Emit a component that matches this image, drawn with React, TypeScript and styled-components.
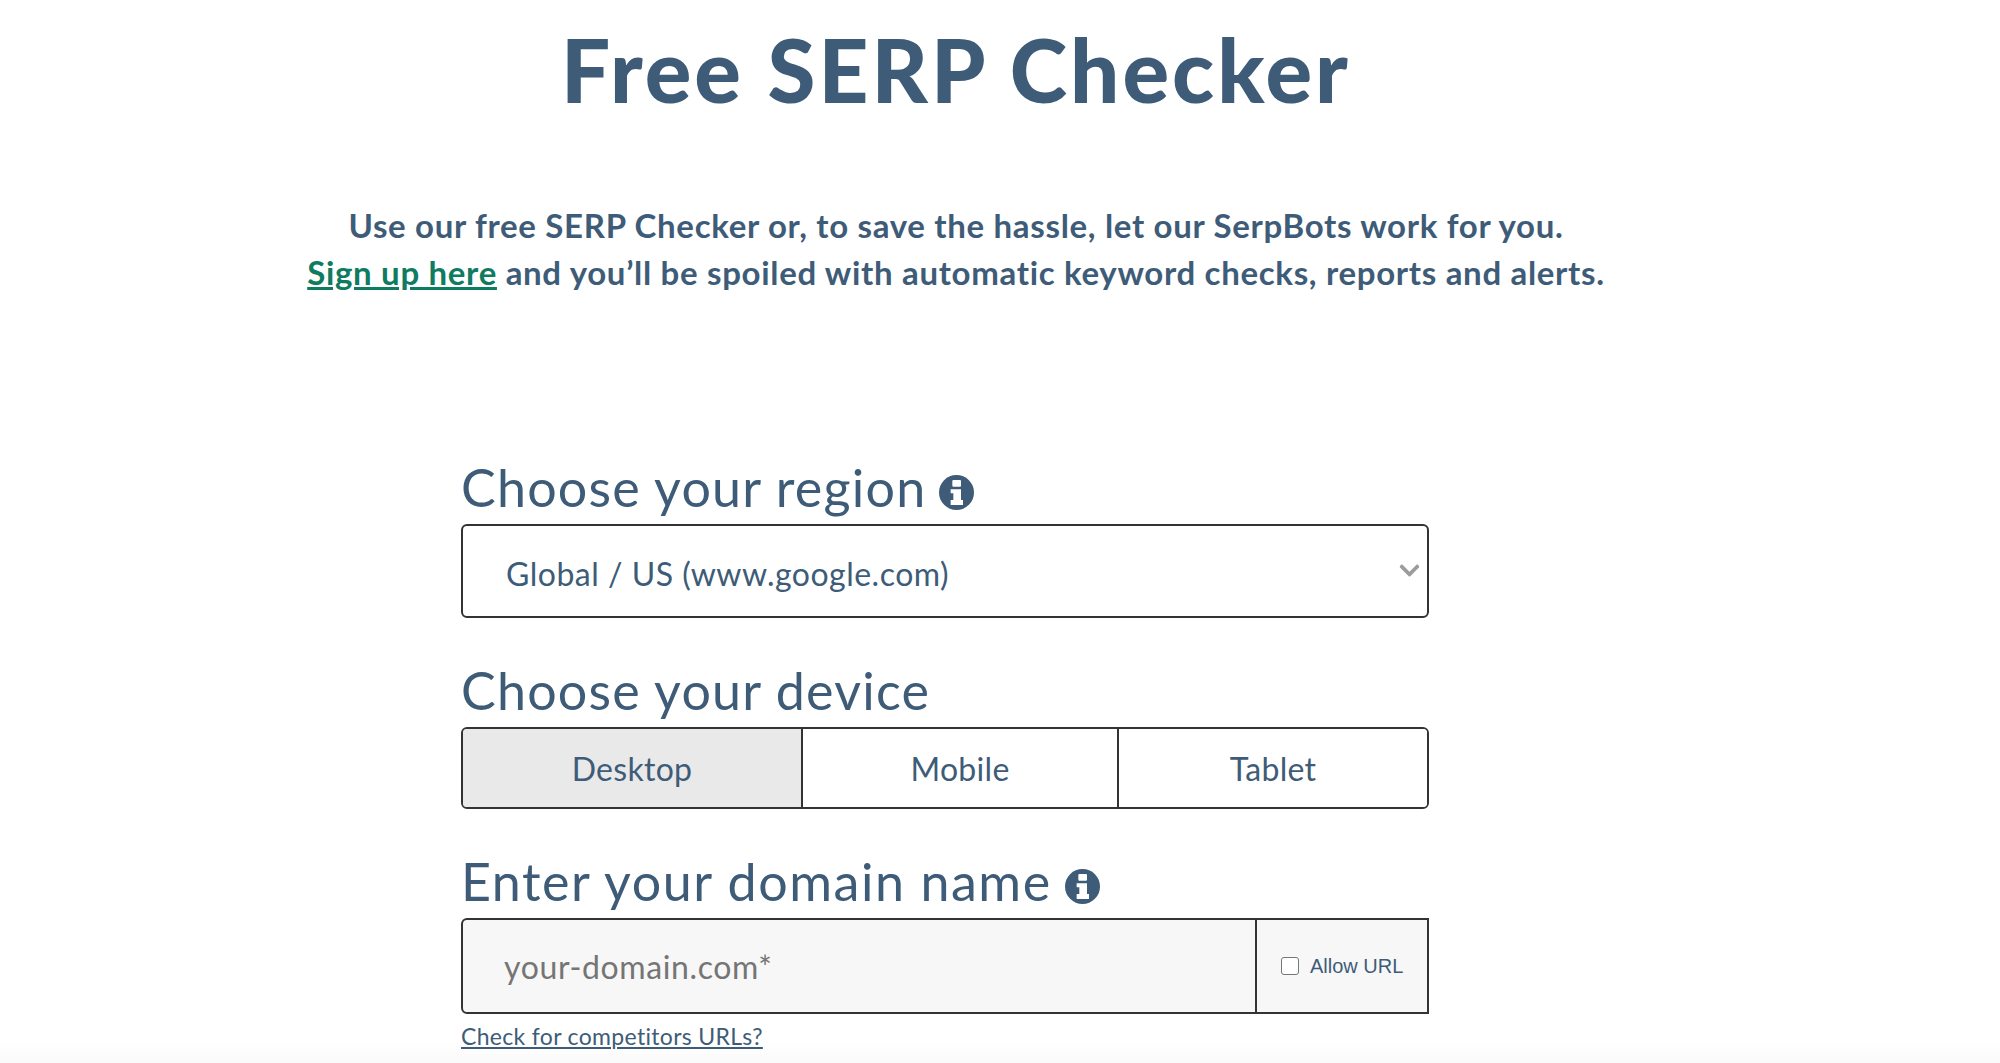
import React from "react";
import styled, { createGlobalStyle } from "styled-components";
import { FaChevronDown } from "react-icons/fa";

const ink = "#3e5c78";
const line = "#333333";
const family = `Lato, "Open Sans", sans-serif`;

const Global = createGlobalStyle`
  html, body { margin: 0; padding: 0; background: #ffffff; }
  body { font-family: ${family}; color: ${ink}; }
  * { box-sizing: border-box; }
`;

const Page = styled.main`
  width: 2000px;
  height: 1063px;
  overflow: hidden;
  background: linear-gradient(to bottom, #ffffff 0, #ffffff 1040px, #fafafa 1063px);
`;

const Intro = styled.header`
  width: 1912px;
  text-align: center;
`;

const Title = styled.h1`
  margin: 0;
  padding-top: 20px;
  font-size: 87px;
  line-height: 100px;
  font-weight: 900;
  letter-spacing: 3px;
  color: ${ink};
`;

const Lead = styled.p`
  margin: 82px 0 0;
  font-size: 33px;
  line-height: 47px;
  font-weight: 700;
  letter-spacing: 0.68px;
`;

const SignUp = styled.a`
  color: #0f7b5f;
  text-decoration: underline;
`;

const Form = styled.form`
  width: 968px;
  margin: 159px 0 0 461px;
  display: flex;
  flex-direction: column;
`;

const Label = styled.label<{ $top?: number; $spacing?: number }>`
  display: flex;
  align-items: center;
  gap: 13px;
  height: 64px;
  margin-top: ${(p) => p.$top ?? 0}px;
  margin-bottom: 5px;
  font-size: 52px;
  line-height: 64px;
  letter-spacing: ${(p) => p.$spacing ?? 1.2}px;
  white-space: nowrap;
`;

const InfoSvg = styled.svg`
  width: 35px;
  height: 35px;
  flex: none;
  margin-top: 10px;
`;

const Info = () => (
  <InfoSvg viewBox="0 0 105 105" aria-hidden="true">
    <circle cx="52.5" cy="52.5" r="52.5" fill={ink} />
    <path
      fill="#ffffff"
      d="M43 15h20a3 3 0 0 1 3 3v14a3 3 0 0 1-3 3H43a3 3 0 0 1-3-3V18a3 3 0 0 1 3-3zM35 43h31v32h6v15H35V75h8V55h-8z"
    />
  </InfoSvg>
);

const SelectWrap = styled.div`
  position: relative;
  height: 94px;
`;

const Select = styled.select`
  width: 100%;
  height: 100%;
  appearance: none;
  border: 2px solid ${line};
  border-radius: 6px;
  background: #ffffff;
  padding: 4px 0 0 43px;
  font-family: ${family};
  font-size: 32px;
  letter-spacing: 0.5px;
  color: ${ink};
`;

const Chevron = styled(FaChevronDown)`
  position: absolute;
  top: 35px;
  right: 8px;
  width: 23px;
  height: 23px;
  color: #9c9c9c;
  pointer-events: none;
`;

const Devices = styled.div`
  display: flex;
  height: 82px;
  border: 2px solid ${line};
  border-radius: 6px;
  overflow: hidden;
`;

const Device = styled.button<{ $active?: boolean; $width: number }>`
  flex: ${(p) => (p.$width ? `0 0 ${p.$width}px` : "1")};
  border: 0;
  border-left: ${(p) => (p.$active ? "0" : `2px solid ${line}`)};
  background: ${(p) => (p.$active ? "#e9e9e9" : "#ffffff")};
  font-family: ${family};
  font-size: 32px;
  letter-spacing: 0.3px;
  color: ${ink};
  padding: 0;
`;

const Domain = styled.div`
  display: flex;
  height: 96px;
  border: 2px solid ${line};
  border-radius: 6px 0 0 6px;
  background: #f7f7f7;
`;

const DomainInput = styled.input`
  flex: 1;
  min-width: 0;
  border: 0;
  background: transparent;
  padding: 0 0 0 41px;
  font-family: ${family};
  font-size: 32px;
  letter-spacing: 0.62px;
  color: ${ink};
  outline: none;
  &::placeholder {
    color: #757575;
    opacity: 1;
  }
`;

const AllowBox = styled.label`
  flex: 0 0 172px;
  display: flex;
  align-items: center;
  gap: 11px;
  padding-left: 24px;
  border-left: 2px solid ${line};
  font-family: "Liberation Sans", Arial, sans-serif;
  font-size: 20px;
  color: ${ink};
`;

const AllowCheck = styled.input`
  appearance: none;
  width: 18px;
  height: 18px;
  margin: 0;
  border: 1.5px solid #767676;
  border-radius: 3px;
  background: #ffffff;
`;

const Competitors = styled.a`
  display: block;
  margin-top: 6px;
  font-size: 23px;
  line-height: 32px;
  letter-spacing: 0.32px;
  color: ${ink};
  text-decoration: underline;
`;

export default function App() {
  return (
    <Page>
      <Global />
      <Intro>
        <Title>Free SERP Checker</Title>
        <Lead>
          Use our free SERP Checker or, to save the hassle, let our SerpBots work for you.
          <br />
          <SignUp href="#">Sign up here</SignUp> and you’ll be spoiled with automatic keyword checks, reports and alerts.
        </Lead>
      </Intro>
      <Form onSubmit={(e) => e.preventDefault()}>
        <Label>
          Choose your region <Info />
        </Label>
        <SelectWrap>
          <Select defaultValue="us">
            <option value="us">Global / US (www.google.com)</option>
          </Select>
          <Chevron />
        </SelectWrap>
        <Label $top={40}>Choose your device</Label>
        <Devices>
          <Device type="button" $active $width={338}>Desktop</Device>
          <Device type="button" $width={316}>Mobile</Device>
          <Device type="button" $width={0}>Tablet</Device>
        </Devices>
        <Label $top={40} $spacing={1.55}>
          Enter your domain name <Info />
        </Label>
        <Domain>
          <DomainInput placeholder="your-domain.com*" />
          <AllowBox>
            <AllowCheck type="checkbox" />
            Allow URL
          </AllowBox>
        </Domain>
        <Competitors href="#">Check for competitors URLs?</Competitors>
      </Form>
    </Page>
  );
}
